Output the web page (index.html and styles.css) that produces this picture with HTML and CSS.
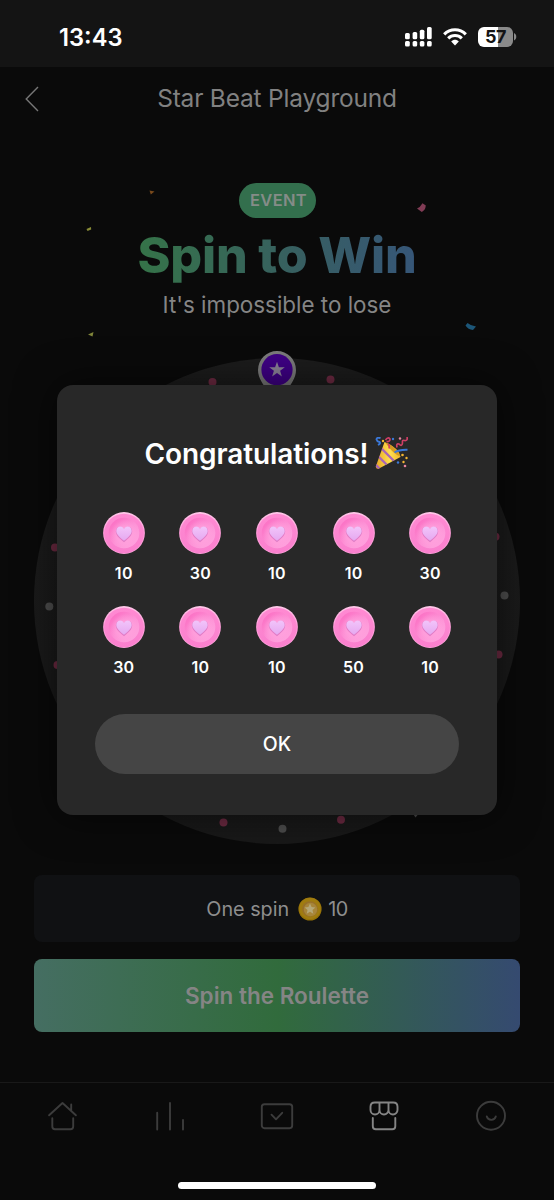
FILE: index.html
```html
<!DOCTYPE html>
<html lang="en">
<head>
<meta charset="utf-8">
<title>Star Beat Playground</title>
<link rel="stylesheet" href="styles.css">
</head>
<body>
<div class="screen">
  <div class="status">
    <span class="time">13:43</span>
    <div class="status-icons">
      <svg width="28" height="20" viewBox="0 0 28 20" fill="#fff">
        <rect x="0" y="6" width="4.8" height="6.3" rx="1.5"/><rect x="7.6" y="5" width="4.6" height="7.3" rx="1.5"/><rect x="14.8" y="2.8" width="4.6" height="9.5" rx="1.5"/><rect x="22" y="0" width="4.7" height="12.3" rx="1.5"/>
        <rect x="0" y="14.1" width="4.8" height="5.4" rx="1.5"/><rect x="7.6" y="14.1" width="4.6" height="5.4" rx="1.5"/><rect x="14.8" y="14.1" width="4.6" height="5.4" rx="1.5"/><rect x="22" y="14.1" width="4.7" height="5.4" rx="1.5"/>
      </svg>
      <svg class="wifi" width="24" height="18" viewBox="0 0 24 18" fill="none" stroke="#fff" stroke-width="3.1">
        <path d="M1.2 6.3C7.2.2 16.8.2 22.8 6.3"/><path d="M5.2 10.4C9 6.6 15 6.6 18.8 10.4"/><path d="M8.2 13.4C10.3 11.3 13.7 11.3 15.8 13.4L12 17.4Z" fill="#fff" stroke="none"/>
      </svg>
      <div class="battery"><span>57</span></div>
      <svg class="battery-cap" width="3" height="8" viewBox="0 0 3 8"><path d="M0 0C3 1.4 3 6.1 0 7.5Z" fill="#8a8a8a"/></svg>
    </div>
  </div>
  <header class="header">
    <svg class="back" width="14" height="26" viewBox="0 0 14 26" fill="none" stroke="#777" stroke-width="1.4"><path d="M13 1 1.2 13 13 25"/></svg>
    <h1 class="page-title">Star Beat Playground</h1>
  </header>
  <main class="content">
    <div class="badge">EVENT</div>
    <h2 class="headline">Spin to Win</h2>
    <p class="tagline">It's impossible to lose</p>
    <svg class="wheel" width="486" height="496" viewBox="34 348 486 496">
      <defs><linearGradient id="rim" x1="0" y1="0" x2="0" y2="1"><stop offset="0" stop-color="#1c1c1c"/><stop offset="1" stop-color="#191919"/></linearGradient></defs>
      <circle cx="277" cy="601" r="243" fill="url(#rim)"/>
      <g fill="#6f2b43"><circle cx="212.5" cy="382" r="4"/><circle cx="330.5" cy="379.5" r="4"/><circle cx="55" cy="547.5" r="4"/><circle cx="57.5" cy="665" r="4"/><circle cx="495.5" cy="536.7" r="4"/><circle cx="498.5" cy="654.5" r="4"/><circle cx="223.5" cy="822.5" r="4"/><circle cx="341" cy="819.7" r="4"/></g>
      <g fill="#4e4e4e"><circle cx="49.3" cy="606.5" r="4"/><circle cx="504.5" cy="595.5" r="4"/><circle cx="282.5" cy="828.8" r="4"/></g>
      <path d="M258 370A19 19 0 0 1 296 370C296 378 291 384 287 390H267C263 384 258 378 258 370Z" fill="#7c7c7c"/>
      <circle cx="277" cy="369.7" r="15.6" fill="#3f0086"/>
      <path d="M277 361.7 278.9 367.3H284.8L280.1 370.8 281.9 376.4 277 373 272.1 376.4 273.9 370.8 269.2 367.3H275.1Z" fill="#8b8298"/>
    </svg>
    <div class="price"><span>One spin</span>
      <svg width="24" height="24" viewBox="0 0 24 24"><circle cx="12" cy="12" r="11.6" fill="#967207"/><circle cx="12" cy="11.4" r="10.7" fill="#a07c10"/><circle cx="12" cy="12" r="7.8" fill="#98702a"/><circle cx="12.5" cy="12.5" r="6.7" fill="#a8863a"/><path d="M12 6.4 13.6 10 17.4 10.4 14.5 12.9 15.3 16.7 12 14.7 8.7 16.7 9.5 12.9 6.6 10.4 10.4 10Z" fill="#b5a878"/></svg>
      <span class="cost">10</span></div>
    <div class="spin">Spin the Roulette</div>
  </main>
  <nav class="nav">
    <svg width="32" height="32" viewBox="0 0 32 32"><path d="M2.1 15.3 15.5 3 28.9 15.3M24.2 10V4.5M5.3 18.3V26.5Q5.3 29.2 8 29.2H23.5Q26.2 29.2 26.2 26.5V18.3"/></svg>
    <svg width="32" height="32" viewBox="0 0 32 32"><path d="M3.2 12.8V29.5M16 3V29.5M29 20V29.5"/></svg>
    <svg width="34" height="32" viewBox="0 0 34 32"><rect x="1.8" y="4.2" width="30.4" height="24" rx="2.6"/><path d="M11.5 14.7 16 19.3 22.2 12.8"/></svg>
    <svg class="on" width="32" height="32" viewBox="1 0 32 32"><path d="M6.8 2.5H25.2Q29.5 2.5 29.5 6.8V10A4.5 4.5 0 0 1 20.5 10V3M11.5 3V10A4.5 4.5 0 0 1 2.5 10V6.8Q2.5 2.5 6.8 2.5M11.5 10A4.5 4.5 0 0 0 20.5 10M4.8 18V26.2Q4.8 29.2 7.8 29.2H24.3Q27.3 29.2 27.3 26.2V18"/></svg>
    <svg width="32" height="32" viewBox="0 0 32 32"><circle cx="16" cy="15.8" r="14"/><path d="M11.8 16.5A4.7 4.7 0 0 0 20.8 16.5"/></svg>
  </nav>
  <svg class="confetti" width="554" height="1200" viewBox="0 0 554 1200">
    <path d="M149.5 190.5 154.5 191.5 150.8 194.5Z" fill="#7a4a1c"/>
    <path d="M422.5 203.2 425.8 205.5Q425.5 210 421.8 212L417 208.5Q420 207.5 422.5 203.2Z" fill="#813c55"/>
    <path d="M86.5 229 91 227 91.2 229.5 87.5 231Z" fill="#888b36"/>
    <path d="M88 334.5 93.5 332 92.5 336.5Z" fill="#80853a"/>
    <path d="M467.5 323Q471 326 476 326.5L473 330Q468 329.5 465.5 325.5Z" fill="#1c5678"/>
    <path d="M413.5 814.5H418L415.5 817.5Z" fill="#4d4d4d"/>
  </svg>
  <section class="modal">
    <h2 class="congrats"><span>Congratulations!</span>
      <svg width="34" height="34" viewBox="0 0 34 34" fill="none">
        <defs><linearGradient id="cone" x1="0" y1="0" x2="1" y2="0"><stop stop-color="#e5a421"/><stop offset=".5" stop-color="#ffdf50"/><stop offset="1" stop-color="#e9a51d"/></linearGradient><clipPath id="cc"><path d="M9.5 5 .8 29.5Q1 32.5 4 31.5L25.5 20Q24 11 9.5 5Z"/></clipPath></defs>
        <g clip-path="url(#cc)"><path d="M0 0H30V34H0Z" fill="url(#cone)"/><path d="M6 11 20 25M3 19 13 29M0 27 6 33" stroke="#a866b4" stroke-width="2.4"/></g>
        <path d="M10 5.2Q20 8 25.5 19.5Q18 17 10 5.2Z" fill="#d69a20"/>
        <path d="M5.5 1Q1.500 0 1.500 2.500 2 4.500 4.500 5 6 6.500 3 8M19.500 15.500Q24 12.500 32.500 12.800" stroke="#3b78d8" stroke-width="1.9"/>
        <path d="M10.500 3Q13-.5 15 2 15 5 11.500 4.500M13 7Q15 8 14 11.500M22 10.500Q21 6 24 7 27 10 27.500 6 27 2.500 29.500 3.500 33 4 32 0" stroke="#cf3f66" stroke-width="1.7"/>
        <g fill="#f4b631"><circle cx="8" cy="4" r="1.200"/><circle cx="27.500" cy="18" r="1.300"/><circle cx="31.500" cy="21" r="1.200"/><circle cx="28.500" cy="25" r="1.200"/></g><g fill="#e985a0"><circle cx="25" cy="1.500" r="1.200"/><circle cx="30" cy="29" r="1.300"/></g><g fill="#3b78d8"><circle cx="18" cy="2" r="1.200"/><circle cx="23" cy="25.500" r="1.200"/></g>
      </svg>
    </h2>
    <svg class="defs" width="0" height="0"><defs>
      <linearGradient id="ring" x1="0" y1="0" x2="0" y2="1"><stop stop-color="#ff8ad2"/><stop offset="1" stop-color="#fa80ce"/></linearGradient>
      <linearGradient id="edge" x1="0" y1="0" x2="0" y2="1"><stop stop-color="#ffc8e9"/><stop offset=".5" stop-color="#ff9bd9"/><stop offset="1" stop-color="#ffa5dc"/></linearGradient>
      <linearGradient id="dish" x1="0" y1="0" x2="1" y2="1"><stop stop-color="#fb68c0"/><stop offset=".5" stop-color="#fd8fd4"/><stop offset="1" stop-color="#ffaae2"/></linearGradient>
      <radialGradient id="glow" cx=".55" cy=".57" r=".5"><stop stop-color="#ffa6e0"/><stop offset=".6" stop-color="#ff9fdc" stop-opacity=".75"/><stop offset="1" stop-color="#ff9bdb" stop-opacity="0"/></radialGradient>
      <linearGradient id="heart" x1="0" y1="0" x2="0" y2="1"><stop stop-color="#f2c4fa"/><stop offset="1" stop-color="#e5a8f0"/></linearGradient>
      <symbol id="coin" viewBox="0 0 42 42"><circle cx="21" cy="21" r="20.9" fill="url(#edge)"/><circle cx="21" cy="21.5" r="19.8" fill="url(#ring)"/><circle cx="21" cy="21" r="15.3" fill="url(#dish)"/><circle cx="21" cy="21" r="15.3" fill="url(#glow)"/><path d="M21 30.2C16 26 12.8 23 12.8 19.4 12.8 14.3 18.5 13.3 21 17.3 23.5 13.3 29.2 14.3 29.2 19.4 29.2 23 26 26 21 30.2Z" fill="#e27cc6"/><path d="M21 28.8C16.5 25 13.3 22.2 13.3 18.9 13.3 14.3 18.6 13 21 16.9 23.4 13 28.7 14.3 28.7 18.9 28.7 22.2 25.5 25 21 28.8Z" fill="url(#heart)"/></symbol>
    </defs></svg>
    <div class="prizes">
      <div class="prize"><svg width="42" height="42"><use href="#coin"/></svg><span>10</span></div>
      <div class="prize"><svg width="42" height="42"><use href="#coin"/></svg><span>30</span></div>
      <div class="prize"><svg width="42" height="42"><use href="#coin"/></svg><span>10</span></div>
      <div class="prize"><svg width="42" height="42"><use href="#coin"/></svg><span>10</span></div>
      <div class="prize"><svg width="42" height="42"><use href="#coin"/></svg><span>30</span></div>
      <div class="prize"><svg width="42" height="42"><use href="#coin"/></svg><span>30</span></div>
      <div class="prize"><svg width="42" height="42"><use href="#coin"/></svg><span>10</span></div>
      <div class="prize"><svg width="42" height="42"><use href="#coin"/></svg><span>10</span></div>
      <div class="prize"><svg width="42" height="42"><use href="#coin"/></svg><span>50</span></div>
      <div class="prize"><svg width="42" height="42"><use href="#coin"/></svg><span>10</span></div>
    </div>
    <div class="ok">OK</div>
  </section>
  <div class="home-bar"></div>
</div>
</body>
</html>
```
FILE: styles.css
```css
* { box-sizing: border-box; margin: 0; padding: 0; }
body { background: #0a0a0a; font-family: Inter, "Liberation Sans", sans-serif; }
svg { display: block; flex: none; }
.screen { position: relative; width: 554px; height: 1200px; overflow: hidden; display: flex; flex-direction: column; background: #0a0a0a; }
.status { height: 67px; flex: none; background: #141414; display: flex; justify-content: space-between; padding: 0 37px 0 59px; }
.time { color: #fff; font-size: 23.7px; font-weight: 600; line-height: 75px; }
.status-icons { display: flex; padding-top: 27px; }
.wifi { margin: 1px 0 0 10px; }
.battery { width: 35px; height: 20px; margin-left: 11px; border-radius: 6px; background: linear-gradient(90deg, #fff 57%, #8a8a8a 57%); display: flex; justify-content: center; }
.battery span { color: #141414; font-size: 18px; font-weight: 700; line-height: 20px; letter-spacing: -0.6px; }
.battery-cap { margin: 6px 0 0 1px; }
.header { height: 63px; flex: none; display: flex; align-items: center; padding: 0 25px; }
.back { margin-top: 1px; }
.page-title { flex: 1; margin: -2px 14px 0 0; text-align: center; color: #818181; font-size: 24.5px; font-weight: 400; letter-spacing: -0.2px; }
.content { height: 952px; flex: none; display: flex; flex-direction: column; align-items: center; padding-top: 53px; }
.badge { width: 77px; height: 35px; border-radius: 18px; background: #336f4d; color: #858c88; font-size: 16.5px; font-weight: 600; line-height: 35px; text-align: center; letter-spacing: 0.3px; padding-left: 3px; }
.headline { margin-top: 7px; line-height: 60px; font-size: 50px; font-weight: 800; color: transparent; background: linear-gradient(90deg, #357348, #375e62 60%, #365678); background-clip: text; -webkit-background-clip: text; letter-spacing: -0.2px; }
.tagline { margin-top: 4px; line-height: 31px; color: #858585; font-size: 22.4px; }
.wheel { margin-top: 28px; }
.price { width: 486px; height: 67px; flex: none; margin-top: 31px; border-radius: 8px; background: #101113; color: #8e8e8e; font-size: 19.8px; display: flex; align-items: center; justify-content: center; }
.price svg { margin: 0 6px 0 9px; }
.price .cost { letter-spacing: -0.5px; }
.spin { width: 486px; height: 73px; flex: none; margin-top: 17px; border-radius: 8px; background: linear-gradient(90deg, #456e62, #316b3c 50%, #354a70); color: #858585; font-size: 22.5px; font-weight: 600; line-height: 74px; text-align: center; }
.nav { height: 118px; flex: none; border-top: 1px solid #191919; display: flex; justify-content: space-between; padding: 17px 47px 0; }
.nav svg { fill: none; stroke: #3c3c3c; stroke-width: 1.9; stroke-linecap: round; stroke-linejoin: round; }
.nav .on { stroke: #858585; }
.confetti { position: absolute; left: 0; top: 0; }
.modal { position: absolute; left: 57px; top: 385px; width: 440px; height: 430px; border-radius: 16px; background: #282828; color: #fff; box-shadow: 0 0 40px rgba(0, 0, 0, .6); display: flex; flex-direction: column; align-items: center; }
.congrats { margin-top: 50px; height: 38px; display: flex; align-items: center; font-size: 28px; font-weight: 600; line-height: 38px; letter-spacing: -0.1px; }
.congrats svg { margin: 0 0 0 7px; }
.defs { position: absolute; }
.prizes { width: 383px; margin-top: 39px; display: grid; grid-template-columns: repeat(5, 1fr); row-gap: 10px; }
.prize { height: 84px; display: flex; flex-direction: column; align-items: center; }
.prize span { margin-top: 8px; line-height: 22px; font-size: 16px; font-weight: 600; letter-spacing: .3px; }
.ok { width: 364px; height: 60px; margin-top: 24px; border-radius: 30px; background: #454545; font-size: 19.5px; font-weight: 500; line-height: 60px; text-align: center; }
.home-bar { position: absolute; left: 178px; bottom: 11px; width: 198px; height: 7px; border-radius: 4px; background: #fff; }
```
